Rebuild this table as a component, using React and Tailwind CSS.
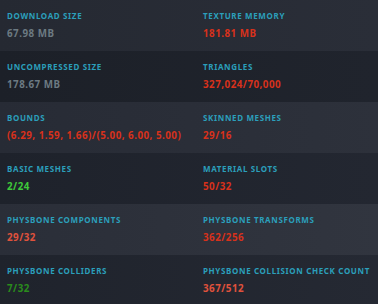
const rows = [
  [
    { label: "Download Size", value: "67.98 MB", color: "text-[#6c7a82]" },
    { label: "Texture Memory", value: "181.81 MB", color: "text-[#d8311b]" },
  ],
  [
    { label: "Uncompressed Size", value: "178.67 MB", color: "text-[#6c7a82]" },
    { label: "Triangles", value: "327,024/70,000", color: "text-[#d8311b]" },
  ],
  [
    { label: "Bounds", value: "(6.29, 1.59, 1.66)/(5.00, 6.00, 5.00)", color: "text-[#d8311b]" },
    { label: "Skinned Meshes", value: "29/16", color: "text-[#d8311b]" },
  ],
  [
    { label: "Basic Meshes", value: "2/24", color: "text-[#3ec93a]" },
    { label: "Material Slots", value: "50/32", color: "text-[#d8311b]" },
  ],
  [
    { label: "PhysBone Components", value: "29/32", color: "text-[#e0523c]" },
    { label: "PhysBone Transforms", value: "362/256", color: "text-[#d8311b]" },
  ],
  [
    { label: "PhysBone Colliders", value: "7/32", color: "text-[#2a8c1c]" },
    { label: "PhysBone Collision Check Count", value: "367/512", color: "text-[#e0523c]" },
  ],
];

const rowBg = [
  "bg-gradient-to-r from-[#252932] to-[#2a2e38]",
  "bg-gradient-to-r from-[#1c2028] to-[#20242d]",
  "bg-gradient-to-r from-[#272b35] to-[#2d313b]",
  "bg-gradient-to-r from-[#1e222b] to-[#232731]",
  "bg-gradient-to-r from-[#2a2e38] to-[#31353f]",
  "bg-gradient-to-r from-[#1f232c] to-[#252933]",
];

function Stat({ label, value, color }) {
  return (
    <div className="pl-[7px] pt-[10px] pb-[11px] flex flex-col gap-[6px] whitespace-nowrap">
      <div className="text-[8px] leading-[12px] font-bold uppercase tracking-[0.08em] text-[#2b9fbb]">
        {label}
      </div>
      <div className={`text-[9.8px] leading-[12px] font-bold tracking-[0.05em] ${color}`}>
        {value}
      </div>
    </div>
  );
}

export default function App() {
  return (
    <div
      className="w-[378px] h-[304px] overflow-hidden bg-[#1c2028]"
      style={{ fontFamily: '"Noto Sans", "DejaVu Sans", sans-serif' }}
    >
      {rows.map((row, i) => (
        <div key={i} className={`grid grid-cols-[196px_1fr] h-[51px] ${rowBg[i]}`}>
          <Stat {...row[0]} />
          <Stat {...row[1]} />
        </div>
      ))}
    </div>
  );
}
